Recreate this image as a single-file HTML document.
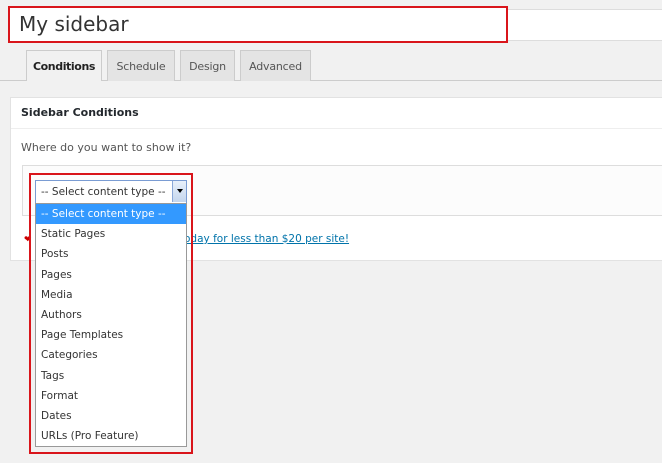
<!DOCTYPE html>
<html><head><meta charset="utf-8"><style>
*{box-sizing:border-box;margin:0;padding:0}
body{width:662px;height:463px;background:#f1f1f1;font-family:"DejaVu Sans","Liberation Sans",sans-serif;position:relative;overflow:hidden;color:#333}
.a{position:absolute}
.tab{position:absolute;top:50px;height:31px;border:1px solid #ccc;border-bottom:none;background:#e4e4e4;font-size:11px;color:#555;text-align:center;line-height:31px;letter-spacing:-0.2px}
.it{height:20.2px;line-height:20px;padding-left:5px;font-size:10.5px;color:#333}
</style></head><body>
<div class="a" style="left:10px;top:9px;width:660px;height:32px;background:#fff;border:1px solid #ddd"></div>
<div class="a" style="left:8px;top:6px;width:500px;height:37px;border:2px solid #d9151b;background:#fff;font-size:20px;line-height:33px;padding-left:9px;color:#333">My sidebar</div>
<div class="a" style="left:0;top:80px;width:662px;height:1px;background:#ccc"></div>
<div class="tab" style="left:26px;width:76px;background:#f1f1f1;color:#222;font-weight:bold;height:31px;letter-spacing:-0.4px">Conditions</div>
<div class="tab" style="left:107px;width:68px">Schedule</div>
<div class="tab" style="left:180px;width:55px">Design</div>
<div class="tab" style="left:240px;width:71px">Advanced</div>
<div class="a" style="left:10px;top:97px;width:660px;height:164px;background:#fff;border:1px solid #e2e2e2"></div>
<div class="a" style="left:11px;top:128px;width:660px;height:1px;background:#eee"></div>
<div class="a" style="left:21px;top:106px;font-size:11px;font-weight:bold;color:#23282d">Sidebar Conditions</div>
<div class="a" style="left:21px;top:141px;font-size:11px;color:#555">Where do you want to show it?</div>
<div class="a" style="left:22px;top:165px;width:650px;height:51px;background:#fcfcfc;border:1px solid #ddd"></div>
<div class="a" style="left:24px;top:235px;color:#c00;font-size:9px">❤</div>
<div class="a" style="left:184px;top:233px;font-size:10.5px;color:#0073aa;text-decoration:underline">oday for less than $20 per site!</div>
<div class="a" style="left:29px;top:173px;width:164px;height:281px;border:2px solid #d9151b"></div>
<div class="a" style="left:35px;top:180px;width:152px;height:24px;background:#fff;border:1px solid #7a9cd3;font-size:10.5px;line-height:22px;padding-left:5px">-- Select content type --</div>
<div class="a" style="left:172px;top:181px;width:14px;height:21px;background:linear-gradient(#e8f0fa,#c4d6ee);border-left:1px solid #8aa8d8"><div style="margin:8px auto 0;width:0;height:0;border-left:3px solid transparent;border-right:3px solid transparent;border-top:4px solid #000"></div></div>
<div class="a" style="left:35px;top:203px;width:152px;height:244px;background:#fff;border:1px solid #999">
<div class="it" style="background:#3399ff;color:#fff">-- Select content type --</div>
<div class="it">Static Pages</div><div class="it">Posts</div><div class="it">Pages</div><div class="it">Media</div><div class="it">Authors</div><div class="it">Page Templates</div><div class="it">Categories</div><div class="it">Tags</div><div class="it">Format</div><div class="it">Dates</div><div class="it">URLs (Pro Feature)</div>
</div>
</body></html>
